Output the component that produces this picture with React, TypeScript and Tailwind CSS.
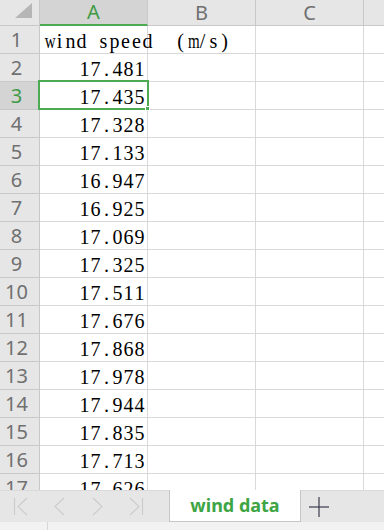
const values = [
  "17.481",
  "17.435",
  "17.328",
  "17.133",
  "16.947",
  "16.925",
  "17.069",
  "17.325",
  "17.511",
  "17.676",
  "17.868",
  "17.978",
  "17.944",
  "17.835",
  "17.713",
  "17.626",
];

const cellFont = { fontFamily: '"Liberation Serif", serif' };
const uiFont = { fontFamily: '"Noto Sans", "Open Sans", sans-serif' };

// SimSun-like fixed pitch: each character gets the same 11px slot,
// wide letters are squeezed to fit like the half-width glyphs do
function Mono({ text }: { text: string }) {
  return (
    <span className="inline-flex">
      {text.split("").map((ch, i) => (
        <span key={i} className="inline-block w-[11px] text-center">
          {ch === "m" || ch === "w" ? (
            <span className="inline-block scale-x-[0.75]">{ch}</span>
          ) : ch === " " ? (
            "\u00a0"
          ) : (
            ch
          )}
        </span>
      ))}
    </span>
  );
}

function ColHeader({ label, active }: { label: string; active?: boolean }) {
  return (
    <div
      className={`h-[26px] flex items-center justify-center border-r border-[#c8c8c8] text-[20px] leading-[24px] ${
        active
          ? "bg-[#d4d4d4] text-[#3d9a45] border-b-2 border-b-[#4caa50]"
          : "bg-[#e6e6e6] text-[#707070] border-b border-b-[#c8c8c8]"
      }`}
      style={uiFont}
    >
      {label}
    </div>
  );
}

function Row({ n, value }: { n: number; value?: string }) {
  const active = n === 3;
  return (
    <>
      <div
        className={`h-[28px] flex items-center justify-center pr-[6px] border-r border-b border-[#c8c8c8] text-[20px] leading-[24px] ${
          active ? "bg-[#d4d4d4] text-[#3d9a45]" : "bg-[#e6e6e6] text-[#707070]"
        }`}
        style={uiFont}
      >
        {n}
      </div>
      <div
        className={`h-[28px] flex items-center pt-[3px] border-r border-b border-[#d9d9d9] text-[20px] leading-none text-black ${
          n === 1 ? "justify-start pl-[3px]" : "justify-end pr-[2px]"
        }`}
        style={cellFont}
      >
        <Mono text={n === 1 ? "wind speed  (m/s)" : value ?? ""} />
      </div>
      <div className="h-[28px] border-r border-b border-[#d9d9d9]" />
      <div className="h-[28px] border-r border-b border-[#d9d9d9]" />
      <div className="h-[28px] border-b border-[#d9d9d9]" />
    </>
  );
}

export default function App() {
  return (
    <div className="w-[384px] h-[530px] flex flex-col bg-white overflow-hidden">
      <div className="relative h-[490px] overflow-hidden">
        <div className="grid grid-cols-[40px_108px_108px_108px_1fr]">
          <div className="relative h-[26px] bg-[#e6e6e6] border-r border-b border-[#c8c8c8]">
            <svg className="absolute left-[15px] top-[3px]" width="18" height="15" viewBox="0 0 18 15">
              <polygon points="17,0 17,15 0,15" fill="#b6b6b6" />
            </svg>
          </div>
          <ColHeader label="A" active />
          <ColHeader label="B" />
          <ColHeader label="C" />
          <div className="h-[26px] bg-[#e6e6e6] border-b border-[#c8c8c8]" />
          <Row n={1} />
          {values.map((v, i) => (
            <Row key={i} n={i + 2} value={v} />
          ))}
        </div>
        <div className="absolute left-[38px] top-[80px] w-[111px] h-[30px] border-2 border-[#4caa50]" />
        <div className="absolute left-[145px] top-[106px] w-[5px] h-[5px] bg-[#4caa50] border border-white" />
      </div>

      <div className="h-[32px] flex bg-[#e6e6e6] border-t border-[#dadada]">
        <div className="w-[169px] flex items-center">
          <svg width="160" height="32" viewBox="0 0 160 32" fill="none" stroke="#cdcdcd" strokeWidth="1.2">
            <line x1="14.5" y1="7" x2="14.5" y2="24" />
            <polyline points="27,7 18,15.5 27,24" />
            <polyline points="64,7 55,15.5 64,24" />
            <polyline points="93,7 102,15.5 93,24" />
            <polyline points="130,7 139,15.5 130,24" />
            <line x1="142.5" y1="7" x2="142.5" y2="24" />
          </svg>
        </div>
        <div
          className="w-[132px] -mt-px flex items-center justify-center bg-white border-x border-b border-[#c6c6c6] text-[18px] font-bold text-[#3ea544]"
          style={uiFont}
        >
          wind data
        </div>
        <div className="flex items-center pl-[8px]">
          <svg width="20" height="20" viewBox="0 0 20 20" stroke="#3a3a4a" strokeWidth="1.2">
            <line x1="0" y1="10" x2="20" y2="10" />
            <line x1="10" y1="0" x2="10" y2="20" />
          </svg>
        </div>
      </div>

      <div className="h-[8px] bg-[#f2f2f2] flex">
        <div className="w-[48px] border-r border-[#d6d6d6]" />
      </div>
    </div>
  );
}
